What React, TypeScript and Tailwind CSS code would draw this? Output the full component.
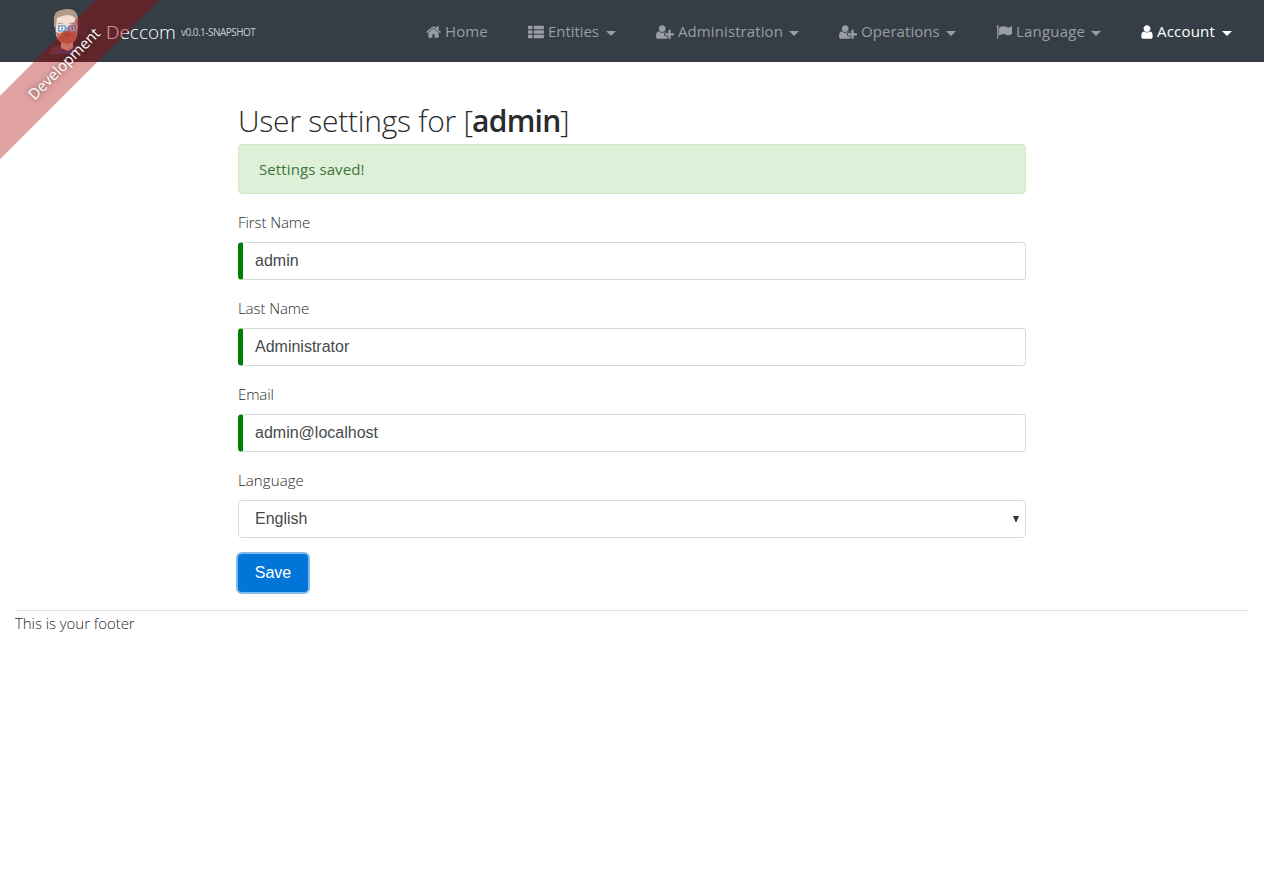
import React from "react";

const HOME =
  "M1472 992v480q0 26-19 45t-45 19h-384v-384h-256v384h-384q-26 0-45-19t-19-45v-480q0-1 .5-3t.5-3l575-474 575 474q1 2 1 6zm223-69l-62 74q-8 9-21 11h-3q-13 0-21-7l-692-577-692 577q-12 8-24 7-13-2-21-11l-62-74q-8-10-7-23.5t11-21.5l719-599q32-26 76-26t76 26l244 204v-195q0-14 9-23t23-9h192q14 0 23 9t9 23v408l219 182q10 8 11 21.5t-7 23.5z";
const LIST =
  "M96 256h320q96 0 96 96v192q0 96-96 96h-320q-96 0-96-96v-192q0-96 96-96zM96 768h320q96 0 96 96v192q0 96-96 96h-320q-96 0-96-96v-192q0-96 96-96zM96 1280h320q96 0 96 96v192q0 96-96 96h-320q-96 0-96-96v-192q0-96 96-96zM736 256h960q96 0 96 96v192q0 96-96 96h-960q-96 0-96-96v-192q0-96 96-96zM736 768h960q96 0 96 96v192q0 96-96 96h-960q-96 0-96-96v-192q0-96 96-96zM736 1280h960q96 0 96 96v192q0 96-96 96h-960q-96 0-96-96v-192q0-96 96-96z";
const USER =
  "M1536 1399q0 109-62.5 187t-150.5 78h-854q-88 0-150.5-78t-62.5-187q0-85 8.5-160.5t31.5-152 58.5-131 94-89 134.5-34.5q131 128 313 128t313-128q76 0 134.5 34.5t94 89 58.5 131 31.5 152 8.5 160.5zm-256-887q0 159-112.5 271.5t-271.5 112.5-271.5-112.5-112.5-271.5 112.5-271.5 271.5-112.5 271.5 112.5 112.5 271.5z";
const USER_PLUS =
  "M704 896q-159 0-271.5-112.5t-112.5-271.5 112.5-271.5 271.5-112.5 271.5 112.5 112.5 271.5-112.5 271.5-271.5 112.5zm960 128h352q13 0 22.5 9.5t9.5 22.5v192q0 13-9.5 22.5t-22.5 9.5h-352v352q0 13-9.5 22.5t-22.5 9.5h-192q-13 0-22.5-9.5t-9.5-22.5v-352h-352q-13 0-22.5-9.5t-9.5-22.5v-192q0-13 9.5-22.5t22.5-9.5h352v-352q0-13 9.5-22.5t22.5-9.5h192q13 0 22.5 9.5t9.5 22.5v352zm-736 224q0 52 38 90t90 38h256v238q-68 50-171 50h-874q-121 0-194-69t-73-190q0-53 3.5-103.5t14-109 26.5-108.5 43-97.5 62-81 85.5-53.5 111.5-20q19 0 39 17 79 61 154.5 91.5t164.5 30.5 164.5-30.5 154.5-91.5q20-17 39-17 132 0 217 96h-223q-52 0-90 38t-38 90v192z";
const FLAG =
  "M320 256q0 72-64 110v1266q0 13-9.5 22.5t-22.5 9.5h-64q-13 0-22.5-9.5t-9.5-22.5v-1266q-64-38-64-110 0-53 37.5-90.5t90.5-37.5 90.5 37.5 37.5 90.5zm1472 64v763q0 25-12.5 38.5t-39.5 27.5q-215 116-369 116-61 0-123.5-22t-108.5-48-115.5-48-142.5-22q-192 0-464 146-17 9-33 9-26 0-45-19t-19-45v-742q0-32 31-55 21-14 79-43 236-120 421-120 107 0 200 29t219 88q38 19 88 19 54 0 117.5-21t110-47 88-47 54.5-21q26 0 45 19t19 45z";

type NavEntry = {
  label: string;
  path: string;
  viewBox: string;
  icon: string;
  text: string;
  caret?: boolean;
  active?: boolean;
};

const NAV: NavEntry[] = [
  { label: "Home", path: HOME, viewBox: "64 0 1664 1792", icon: "w-[15px] mr-1", text: "w-[43px] tracking-[0.1px]" },
  { label: "Entities", path: LIST, viewBox: "0 64 1792 1792", icon: "w-4 mr-1", text: "w-[52px] tracking-[-0.05px]", caret: true },
  { label: "Administration", path: USER_PLUS, viewBox: "0 0 2048 1792", icon: "w-[18px] mr-1", text: "w-[105px] tracking-[0.1px]", caret: true },
  { label: "Operations", path: USER_PLUS, viewBox: "0 0 2048 1792", icon: "w-[18px] mr-1", text: "w-[79px] tracking-[0.05px]", caret: true },
  { label: "Language", path: FLAG, viewBox: "0 0 1792 1792", icon: "w-4 mr-1", text: "w-[69px] tracking-[0.2px]", caret: true },
  { label: "Account", path: USER, viewBox: "256 0 1280 1792", icon: "w-[12px] mr-1", text: "w-[59px] tracking-[0.2px]", caret: true, active: true },
];

function NavItem({ item }: { item: NavEntry }) {
  return (
    <a className={`flex h-6 items-center whitespace-nowrap ${item.active ? "text-white" : "text-[#9a9ea3]"}`}>
      <svg viewBox={item.viewBox} className={`h-4 shrink-0 fill-current ${item.icon}`}>
        <path d={item.path} />
      </svg>
      <span className={item.text}>{item.label}</span>
      {item.caret && (
        <svg viewBox="0 0 10 5" className="mt-1 ml-1.5 h-[5px] w-[10px] shrink-0 fill-current">
          <path d="M0 0h10L5 5z" />
        </svg>
      )}
    </a>
  );
}

function Avatar() {
  return (
    <svg viewBox="0 0 34 45" className="h-[45px] w-[34px] shrink-0">
      <path d="M0 45q0-6 6-7.500l7-2h8l6 2q6 1.500 6 7.500z" fill="#5c4a5e" />
      <path d="M10 40l8 3 8-3 1 5H9z" fill="#45517d" />
      <path d="M12 30h12v9l-5 3-7-3z" fill="#e0b3a6" />
      <path d="M6 13q0-8 12-8 11 0 11 8l-1 13q-2 9-10 9T7 26z" fill="#f2dfd2" />
      <path d="M5 18V8q1-6 7-7 8-2 12 0 6 2 5 16l-2-1-1-7q-3-3-8-3-6 1-10 3l-1 9z" fill="#b39a86" />
      <path d="M9 15q2-1.500 5 0M20 15q3-1.500 5 0" stroke="#b39a86" strokeWidth="1.200" fill="none" />
      <path d="M7 23q4 2 6 0 5-2 9 0 3 1 6-1l-1 6q-2 7-9 7-8-1-10-7z" fill="#c77763" />
      <path d="M15 26h6" stroke="#a9434b" strokeWidth="1" />
      <rect x="9.700" y="17" width="6.500" height="5" fill="#edf4fa" stroke="#4d96d6" strokeWidth="1.200" />
      <rect x="20" y="17" width="6.500" height="5" fill="#dfe6f2" stroke="#5b91cc" strokeWidth="1.200" />
      <path d="M16.500 19h3.500" stroke="#4b8fd0" strokeWidth="1.200" />
      <path d="M12.300 19.500h1.400M22.600 19.500h1.400" stroke="#35405f" strokeWidth="1.400" />
    </svg>
  );
}

function Field({ label, value }: { label: string; value: string }) {
  return (
    <div className="mb-4 flex flex-col">
      <label className="mb-2 h-6 leading-[25px] font-light tracking-[-0.08px]">{label}</label>
      <input
        readOnly
        value={value}
        className="h-[38px] w-full rounded-[4px] border border-l-[5px] border-[#d9d9d9] border-l-[#008000] bg-white px-3 font-['Liberation_Sans',sans-serif] text-base text-[#464a4c] outline-none"
      />
    </div>
  );
}

export default function App() {
  return (
    <div className="relative min-h-[892px] overflow-hidden bg-white font-['Open_Sans','Noto_Sans',sans-serif] text-[15px] text-[#292b2c]">
      <header className="flex h-[62px] items-center justify-between bg-[#353d47] pr-8 pl-[49px]">
        <div className="flex items-center">
          <Avatar />
          <span className="mt-px ml-[23px] w-[75px] text-[19px] leading-7 font-light text-white">Deccom</span>
          <span className="mt-[3px] text-[10px] tracking-[-0.52px] whitespace-nowrap text-[#c9cdd0]">v0.0.1-SNAPSHOT</span>
        </div>
        <nav className="mt-px flex gap-10">
          {NAV.map((item) => (
            <NavItem key={item.label} item={item} />
          ))}
        </nav>
      </header>

      <div className="pointer-events-none absolute top-[41px] left-[-56px] flex h-[45px] w-60 -rotate-45 items-center justify-center bg-[#aa0000]/37 text-white [text-shadow:0_0_5px_rgba(0,0,0,0.5)]">
        <span className="font-medium">Development</span>
      </div>

      <main className="mx-auto w-[788px] pt-10">
        <h2 className="flex h-[42px] items-center pb-1 text-[30px] leading-[38px] font-light whitespace-nowrap">
          <span className="w-[234px] tracking-[-0.25px]">User settings for [</span>
          <b className="w-[88px] font-semibold tracking-[-0.7px]">admin</b>
          <span>]</span>
        </h2>
        <div className="mb-4 flex h-[50px] items-center rounded-[4px] border border-[#d0e9c6] bg-[#dff0d8] px-5 pt-px tracking-[0.1px] text-[#3c763d]">
          Settings saved!
        </div>
        <Field label="First Name" value="admin" />
        <Field label="Last Name" value="Administrator" />
        <Field label="Email" value="admin@localhost" />
        <label className="mb-2 block h-6 leading-[25px] font-light tracking-[0.1px]">Language</label>
        <div className="flex h-[38px] items-center justify-between rounded-[4px] border border-[#d9d9d9] pr-[6px] pl-4 font-['Liberation_Sans',sans-serif] text-base text-[#464a4c]">
          <span>English</span>
          <svg viewBox="0 0 6 6" className="mb-px h-[6px] w-[6px] fill-[#373a3c]">
            <path d="M0 0h6L3.5 6h-1z" />
          </svg>
        </div>
        <button className="mt-4 flex h-[38px] w-[70px] items-center justify-center rounded-[4px] bg-[#0275d8] font-['Liberation_Sans',sans-serif] text-base text-white shadow-[0_0_0_2px_rgba(2,117,216,0.5)]">
          Save
        </button>
      </main>

      <footer className="mx-[15px] mt-[18px] border-t border-[#dfdfdf] font-light tracking-[-0.06px]">
        <p className="leading-[25px]">This is your footer</p>
      </footer>
    </div>
  );
}
